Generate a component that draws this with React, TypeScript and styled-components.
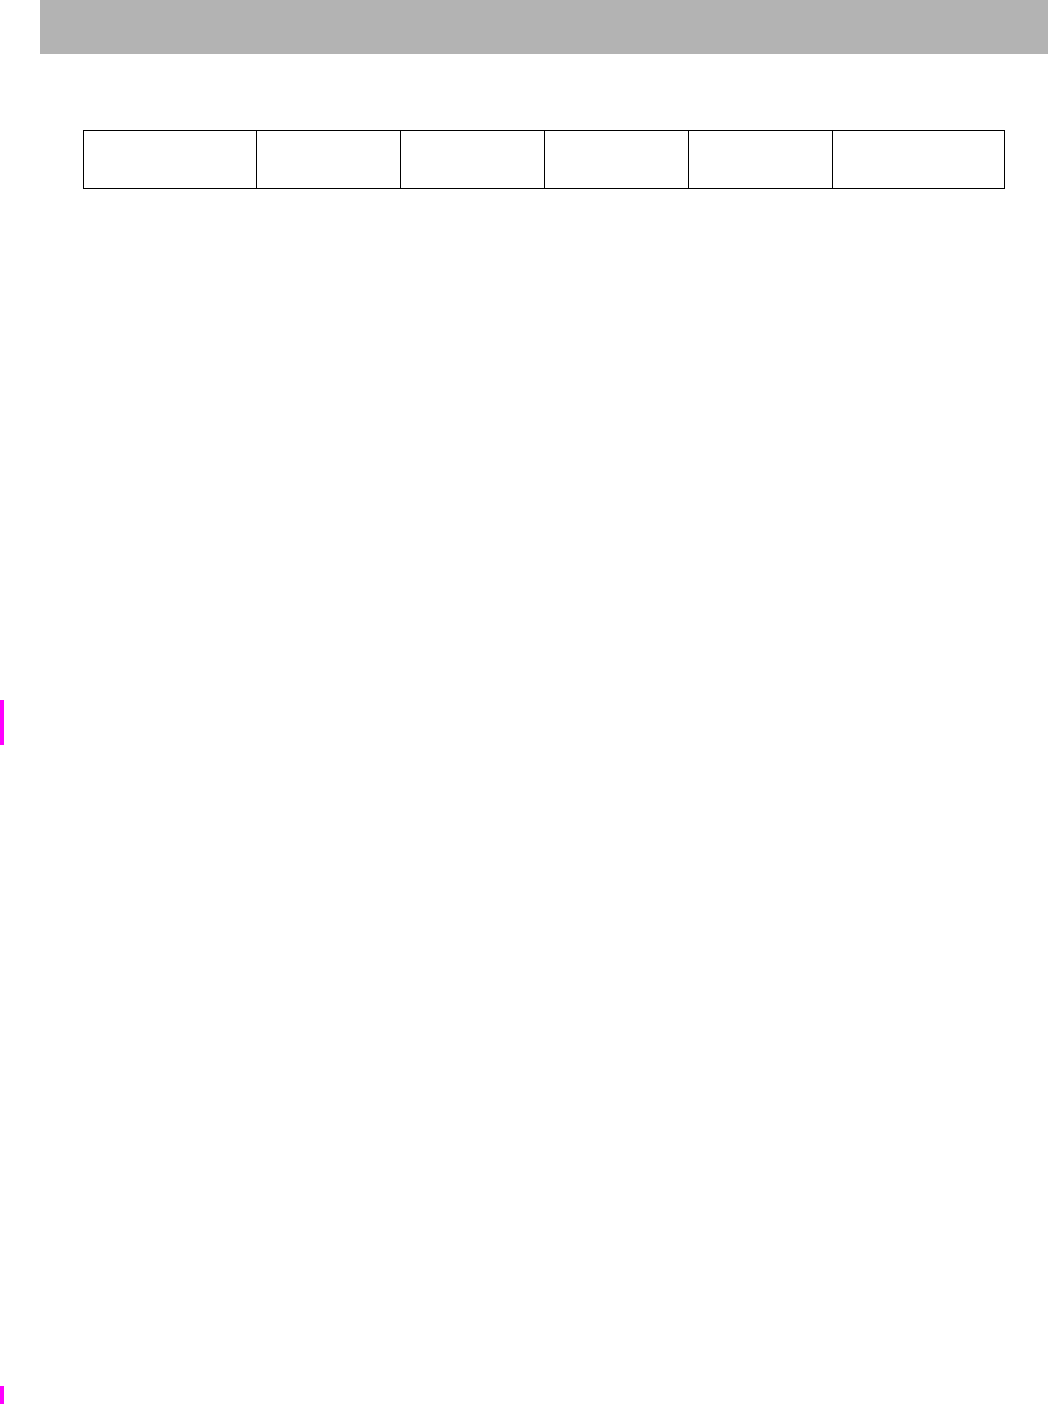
import React from "react";
import styled, { createGlobalStyle } from "styled-components";

const GlobalStyle = createGlobalStyle`
  html, body {
    margin: 0;
    padding: 0;
    background: #ffffff;
    font-family: "Liberation Sans", Arial, sans-serif;
  }
`;

const Page = styled.div`
  position: relative;
  min-height: 1404px;
  overflow: hidden;
`;

const TopBar = styled.header`
  margin-left: 40px;
  height: 54px;
  background: #b3b3b3;
`;

const Table = styled.div<{ $columns: number[] }>`
  display: grid;
  grid-template-columns: ${(props) => props.$columns.map((c) => `${c}px`).join(" ")};
  margin: 76px 0 0 83px;
  width: 922px;
  height: 59px;
  box-sizing: border-box;
  border: 1px solid #000000;
`;

const Cell = styled.div`
  box-sizing: border-box;
  & + & {
    border-left: 1px solid #000000;
  }
`;

const EdgeMark = styled.div<{ $top: number; $height: number }>`
  position: absolute;
  left: 0;
  top: ${(props) => props.$top}px;
  width: 4px;
  height: ${(props) => props.$height}px;
  background: #ff00ff;
`;

const columns = [172, 144, 144, 144, 144, 172];

export default function App() {
  return (
    <>
      <GlobalStyle />
      <Page>
        <TopBar />
        <Table $columns={columns}>
          {columns.map((_, i) => (
            <Cell key={i} />
          ))}
        </Table>
        <EdgeMark $top={700} $height={45} />
        <EdgeMark $top={1386} $height={18} />
      </Page>
    </>
  );
}
